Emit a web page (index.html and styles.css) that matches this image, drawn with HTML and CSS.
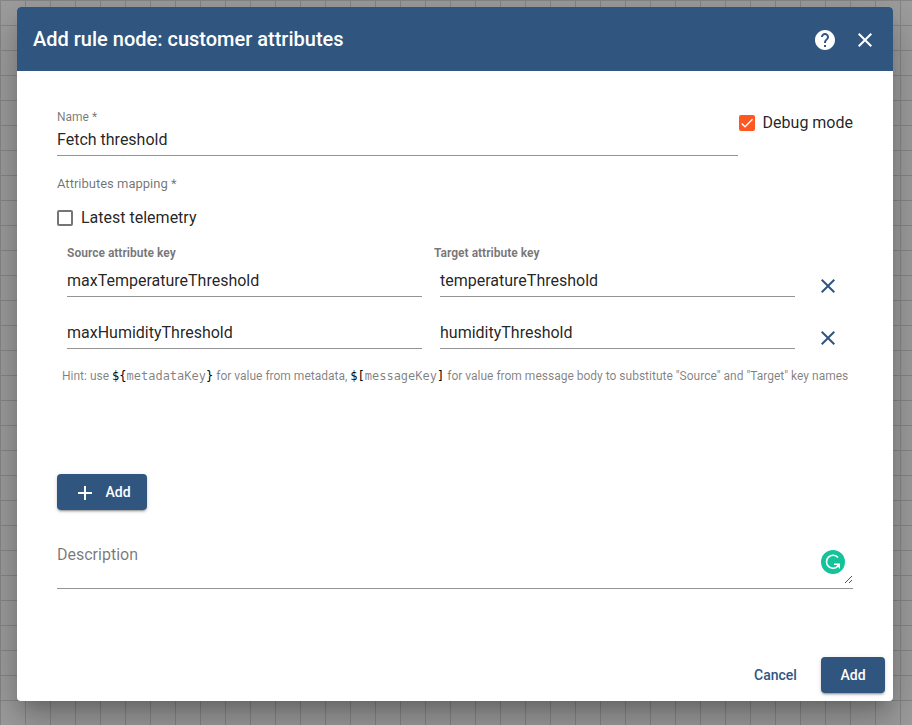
FILE: index.html
```html
<!DOCTYPE html>
<html lang="en">
<head>
<meta charset="utf-8">
<title>Add rule node</title>
<link rel="stylesheet" href="styles.css">
</head>
<body>
<div class="dialog">
  <header class="toolbar">
    <h2 class="title">Add rule node: customer attributes</h2>
    <svg class="icon help" viewBox="0 0 24 24"><path d="M12 2C6.48 2 2 6.48 2 12s4.48 10 10 10 10-4.480 10-10S17.520 2 12 2zm1 17h-2v-2h2v2zm2.070-7.750l-.9.920C13.450 12.900 13 13.500 13 15h-2v-.5c0-1.100.45-2.100 1.170-2.830l1.240-1.260c.37-.36.59-.86.59-1.410 0-1.100-.9-2-2-2s-2 .9-2 2H8c0-2.210 1.790-4 4-4s4 1.790 4 4c0 .88-.36 1.680-.93 2.250z"/></svg>
    <svg class="icon" viewBox="0 0 24 24"><path d="M19 6.410L17.590 5 12 10.590 6.410 5 5 6.410 10.590 12 5 17.590 6.410 19 12 13.410 17.590 19 19 17.590 13.410 12z"/></svg>
  </header>
  <main class="content">
    <div class="name-row">
      <div class="name-field">
        <label class="float-label">Name *</label>
        <div class="value">Fetch threshold</div>
      </div>
      <div class="check debug">
        <span class="box checked"><svg viewBox="0 0 24 24"><path d="M4.100 12.700 9 17.600 20.300 6.300"/></svg></span>
        <span>Debug mode</span>
      </div>
    </div>
    <div class="section-label">Attributes mapping *</div>
    <div class="check latest"><span class="box"></span><span>Latest telemetry</span></div>
    <div class="map">
      <div class="map-head"><span>Source attribute key</span><span>Target attribute key</span></div>
      <div class="map-row">
        <div class="key">maxTemperatureThreshold</div>
        <div class="key">temperatureThreshold</div>
        <svg class="icon remove" viewBox="0 0 24 24"><path d="M19 6.410L17.590 5 12 10.590 6.410 5 5 6.410 10.590 12 5 17.590 6.410 19 12 13.410 17.590 19 19 17.590 13.410 12z"/></svg>
      </div>
      <div class="map-row">
        <div class="key">maxHumidityThreshold</div>
        <div class="key">humidityThreshold</div>
        <svg class="icon remove" viewBox="0 0 24 24"><path d="M19 6.410L17.590 5 12 10.590 6.410 5 5 6.410 10.590 12 5 17.590 6.410 19 12 13.410 17.590 19 19 17.590 13.410 12z"/></svg>
      </div>
    </div>
    <div class="hint">Hint: use <code><b>${</b>metadataKey<b>}</b></code> for value from metadata, <code><b>$[</b>messageKey<b>]</b></code> for value from message body to substitute "Source" and "Target" key names</div>
    <div class="button add-row"><svg class="icon" viewBox="0 0 24 24"><path d="M19 13h-6v6h-2v-6H5v-2h6V5h2v6h6v2z"/></svg><span>Add</span></div>
    <div class="description">
      <span>Description</span>
      <svg class="assistant" viewBox="0 0 24 24"><circle cx="12" cy="12" r="12" fill="#15c39a"/><path d="M17 7.600A6.500 6.500 0 1 0 17.200 15.700" fill="none" stroke="#fff" stroke-width="1.600"/><path d="M13 13.500H19V19L17.400 17.200 16 16.300 16.400 14.900H13z" fill="#fff"/></svg>
      <svg class="grip" viewBox="0 0 8 8" shape-rendering="crispEdges"><path d="M.5 7.500 7.500.5M4.500 7.500 7.500 4.500"/></svg>
    </div>
  </main>
  <footer class="actions">
    <div class="button flat">Cancel</div>
    <div class="button">Add</div>
  </footer>
</div>
</body>
</html>
```

FILE: styles.css
```css
* { box-sizing: border-box; }
body {
  margin: 0;
  height: 725px;
  overflow: hidden;
  padding: 7px 19px 24px 17px;
  font: 16px/24px Roboto, sans-serif;
  color: rgba(0, 0, 0, .87);
  background-color: #9f9f9f;
  background-image:
    linear-gradient(90deg, #888 1px, transparent 1px),
    linear-gradient(#888 1px, transparent 1px);
  background-size: 25px 25px;
}
.dialog {
  display: flex;
  flex-direction: column;
  height: 694px;
  background: #fff;
  border-radius: 4px;
  box-shadow: 0 11px 15px -7px rgba(0,0,0,.2), 0 24px 38px 3px rgba(0,0,0,.14), 0 9px 46px 8px rgba(0,0,0,.12);
}
.toolbar {
  display: flex;
  align-items: center;
  height: 64px;
  padding: 2px 16px 0;
  color: #fff;
  background: #305680;
  border-radius: 4px 4px 0 0;
}
.title { flex: 1; margin: -3px 0 0; font-size: 20px; font-weight: 500; line-height: 32px; }
.icon { width: 24px; height: 24px; fill: currentColor; flex: none; }
.help { margin-right: 16px; }
.content { flex: 1; padding: 37px 40px 0; }
.name-row { display: flex; height: 48px; }
.name-field { flex: 1; height: 48px; border-bottom: 1px solid #949494; }
.float-label { display: block; font-size: 12px; line-height: 19px; color: rgba(0,0,0,.54); }
.value { line-height: 26px; }
.check { display: flex; align-items: center; gap: 8px; height: 24px; }
.debug { margin: 3px 0 0 1px; }
.box { width: 16px; height: 16px; border: 2px solid #757575; border-radius: 2px; }
.checked { border: 0; background: #ff5722; display: flex; }
.check .box { margin-top: -1px; }
.check .checked { margin-top: 0; }
.box svg { width: 16px; height: 16px; fill: none; stroke: #fff; stroke-width: 2.130; }
.section-label { margin-top: 18px; font-size: 13px; line-height: 20px; color: rgba(0,0,0,.57); }
.latest { margin-top: 12px; }
.map { padding: 14px 10px 0; }
.map-head { display: grid; grid-template-columns: 367px 1fr; font-size: 12px; font-weight: 700; line-height: 19px; color: rgba(0,0,0,.54); }
.map-row { display: grid; grid-template-columns: 355px 355px 24px; column-gap: 18px; height: 52px; padding-top: 5px; }
.key { height: 29px; line-height: 26px; border-bottom: 1px solid #949494; }
.remove { color: #305680; margin: 6px 0 0 3px; }
.hint { margin: -3px 0 0 5px; font-size: 12px; line-height: 24px; white-space: nowrap; color: rgba(0,0,0,.5); }
.hint code { font-family: "DejaVu Sans Mono", monospace; font-size: 12px; line-height: 1; }
.hint b { font-weight: 400; color: #000; }
.button {
  display: flex; align-items: center; justify-content: center;
  width: 64px; height: 36px;
  font-size: 14px; font-weight: 500;
  color: #fff; background: #305680; border-radius: 4px;
  box-shadow: 0 3px 1px -2px rgba(0,0,0,.2), 0 2px 2px rgba(0,0,0,.14), 0 1px 5px rgba(0,0,0,.12);
}
.add-row { width: 90px; gap: 8px; margin-top: 86px; }
.add-row .icon { margin-top: 2px; }
.description { position: relative; height: 51px; margin-top: 28px; padding-top: 5px; border-bottom: 1px solid #949494; color: rgba(0,0,0,.54); }
.assistant { position: absolute; right: 8px; top: 12px; width: 24px; height: 24px; }
.grip { position: absolute; right: 1px; bottom: 4px; width: 8px; height: 8px; stroke: #555; stroke-width: 1; }
.actions { display: flex; justify-content: flex-end; gap: 8px; padding: 8px; }
.flat { width: 75px; color: #305680; background: none; box-shadow: none; }
```
